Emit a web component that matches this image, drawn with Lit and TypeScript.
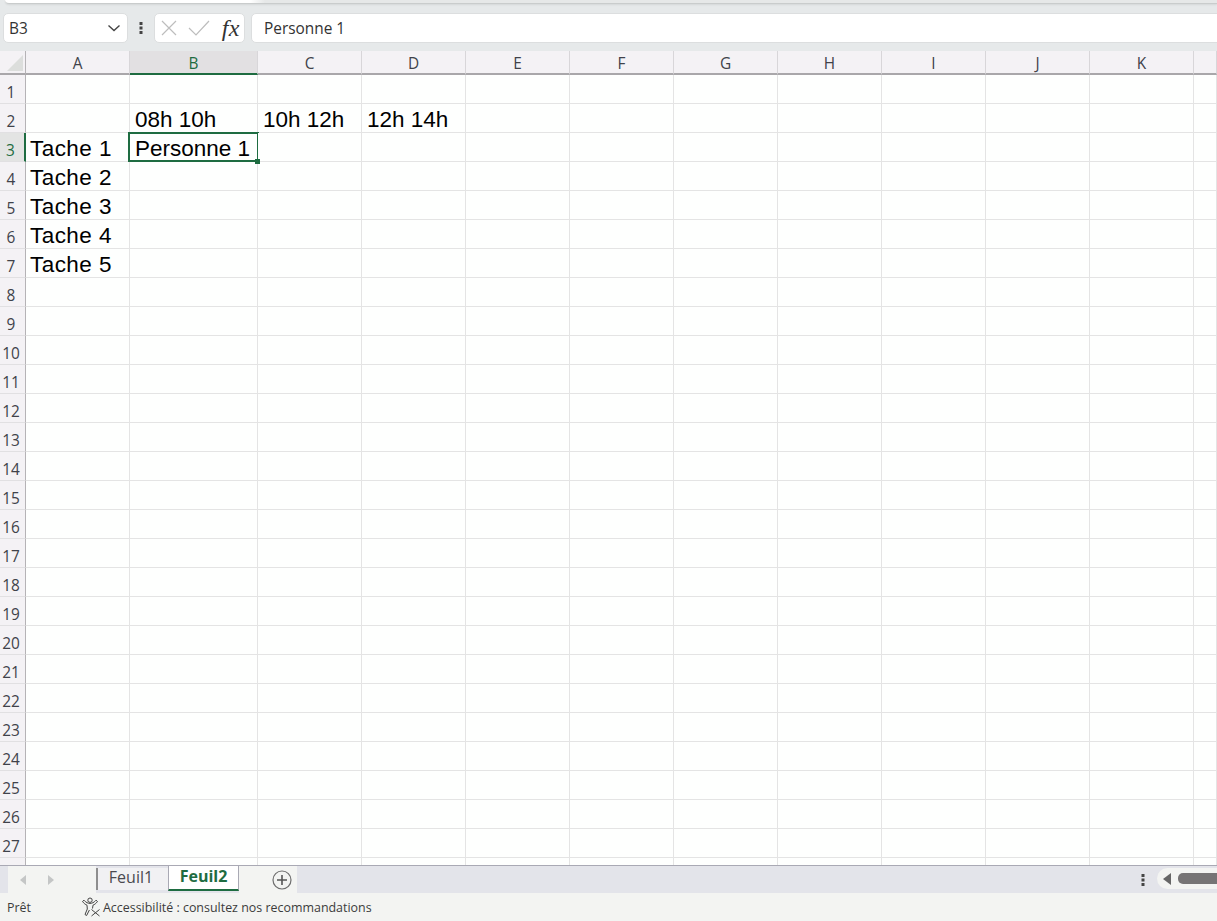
import { LitElement, html, css } from "lit";
import { customElement } from "lit/decorators.js";

const COLS = ["A", "B", "C", "D", "E", "F", "G", "H", "I", "J", "K", ""];
const CELLS: Record<string, string> = {
  B2: "08h 10h",
  C2: "10h 12h",
  D2: "12h 14h",
  A3: "Tache 1",
  B3: "Personne 1",
  A4: "Tache 2",
  A5: "Tache 3",
  A6: "Tache 4",
  A7: "Tache 5",
};

@customElement("app-root")
export class AppRoot extends LitElement {
  static styles = css`
    :host {
      display: flex;
      flex-direction: column;
      width: 1217px;
      height: 921px;
      overflow: hidden;
      background: #e6e9ea;
      font-family: "Open Sans", "Noto Sans", sans-serif;
      color: #333;
    }
    .ribbon-edge {
      height: 4px;
      padding-left: 5px;
      flex: none;
      box-sizing: border-box;
      background: #e6e9ea;
    }
    .ribbon-inner {
      height: 4px;
      box-sizing: border-box;
      background: linear-gradient(90deg, #fff 0, #fff 245px, #e6e8e8 260px);
      border-bottom: 1px solid #c9cccc;
      border-bottom-left-radius: 4px;
      box-shadow: 0 1px 2px rgba(0, 0, 0, 0.08);
    }
    .formula {
      flex: none;
      height: 47px;
      padding-top: 9px;
      display: flex;
      box-sizing: border-box;
      align-items: flex-start;
    }
    .formula-row {
      display: flex;
      align-items: stretch;
      height: 30px;
      width: 100%;
    }
    .box {
      background: #fff;
      border: 1px solid #dcdedf;
      border-radius: 5px;
      box-sizing: border-box;
      display: flex;
      align-items: center;
    }
    .name {
      width: 125px;
      margin-left: 3px;
      padding: 0 6px 0 5px;
      justify-content: space-between;
      font-size: 15.4px;
    }
    .grip {
      width: 26px;
      display: flex;
      align-items: center;
      justify-content: center;
    }
    .fx {
      width: 91px;
      padding: 0 4px 0 6px;
      justify-content: space-between;
    }
    .fx-sym {
      font-family: "Liberation Serif", serif;
      font-style: italic;
      font-size: 24px;
      line-height: 24px;
      color: #333;
      letter-spacing: 0.5px;
    }
    .value {
      flex: 1;
      margin-left: 6px;
      margin-right: -8px;
      padding-left: 12px;
      font-size: 15.4px;
    }
    .sheet {
      flex: none;
      display: grid;
      grid-template-columns: 26px 104px 128px repeat(9, 104px) 1fr;
      grid-template-rows: 24px repeat(28, 29px);
      height: 814px;
      overflow: hidden;
      background: #fff;
    }
    .corner {
      background: #f4f2f5;
      border-right: 1px solid #b5b3b6;
      border-bottom: 2px solid #a9a7aa;
      box-sizing: border-box;
      position: relative;
    }
    .tri {
      display: block;
      position: absolute;
      left: 7px;
      top: 4px;
    }
    .ch {
      background: #f4f2f5;
      border-right: 1px solid #d8d6d9;
      border-bottom: 2px solid #a9a7aa;
      box-sizing: border-box;
      display: flex;
      align-items: center;
      justify-content: center;
      padding-top: 2px;
      font-size: 15.4px;
      color: #40424a;
    }
    .ch.sel {
      background: #e2e0e2;
      border-bottom-color: #1e6c41;
      color: #1e6c41;
    }
    .rh {
      background: #f4f2f5;
      border-right: 1px solid #b5b3b6;
      border-bottom: 1px solid #e1e0e2;
      box-sizing: border-box;
      display: flex;
      align-items: flex-end;
      justify-content: center;
      padding-right: 3px;
      font-size: 15.4px;
      line-height: 20px;
      color: #40424a;
    }
    .rh.sel {
      background: #e3e4e3;
      border-right: 2px solid #1e6c41;
      color: #1e6c41;
    }
    .c {
      border-right: 1px solid #e4e4e4;
      border-bottom: 1px solid #e4e4e4;
      box-sizing: border-box;
      background: #fefffe;
      font-family: "Liberation Sans", Arial, sans-serif;
      font-size: 22.5px;
      line-height: 31px;
      color: #000;
      padding-left: 5px;
      white-space: nowrap;
      position: relative;
    }
    .c.col-a {
      letter-spacing: 0.45px;
      padding-left: 4px;
    }
    .c.active::after {
      content: "";
      position: absolute;
      left: -2px;
      top: -1px;
      right: -2px;
      bottom: -1px;
      border: 2px solid #1e6c41;
    }
    .handle {
      position: absolute;
      right: -3px;
      bottom: -3px;
      width: 5px;
      height: 5px;
      background: #1e6c41;
      z-index: 2;
    }
    .tabs {
      flex: none;
      height: 28px;
      display: flex;
      background: #e3e4ea;
      border-top: 1px solid #a9a9b4;
      box-sizing: border-box;
    }
    .nav {
      margin-left: 8px;
      width: 88px;
      background: #f3f4f2;
      display: flex;
      align-items: center;
      gap: 22px;
      padding-left: 12px;
      box-sizing: border-box;
    }
    .tab {
      font-size: 16px;
      display: flex;
      align-items: center;
      justify-content: center;
      box-sizing: border-box;
    }
    .tab.off {
      margin-top: 2px;
      width: 72px;
      height: 22px;
      padding: 0 4px 4px 0;
      border-left: 2px solid #8e8e8e;
      background: #f1f1f3;
      color: #4a4a50;
    }
    .tab.on {
      width: 71px;
      height: 25px;
      padding-bottom: 4px;
      background: #fff;
      border-left: 1px solid #a9a9b4;
      border-right: 1px solid #a9a9b4;
      border-bottom: 2px solid #1e6c41;
      color: #1e6c41;
      font-weight: 700;
    }
    .add {
      width: 58px;
      background: #f3f4f2;
      display: flex;
      align-items: center;
      padding-left: 33px;
      box-sizing: border-box;
    }
    .spacer {
      flex: 1;
    }
    .hgrip {
      width: 30px;
      display: flex;
      align-items: center;
      justify-content: center;
      margin-right: -1px;
    }
    .scroll {
      width: 60px;
      margin-top: 2px;
      height: 21px;
      background: #f3f4f2;
      border-radius: 11px 0 0 11px;
      display: flex;
      align-items: center;
      padding-left: 6px;
      box-sizing: border-box;
    }
    .thumb {
      margin-left: 7px;
      flex: 1;
      height: 11px;
      background: #767475;
      border-radius: 5px 0 0 5px;
    }
    .status {
      flex: none;
      height: 28px;
      background: #f3f4f2;
      display: flex;
      align-items: center;
      font-size: 12.45px;
      color: #3c3c3c;
    }
    .ready {
      width: 81px;
      padding-left: 7px;
      box-sizing: border-box;
    }
    .a11y {
      display: flex;
      align-items: center;
      gap: 2px;
    }
  `;

  private grip() {
    return html`<svg width="4" height="14" viewBox="0 0 4 14" aria-hidden="true">
      <rect x="0.5" y="1" width="3" height="3" fill="#444"></rect>
      <rect x="0.5" y="5.5" width="3" height="3" fill="#444"></rect>
      <rect x="0.5" y="10" width="3" height="3" fill="#444"></rect>
    </svg>`;
  }

  private cell(col: string, row: number) {
    if (!col) return html`<div class="c"></div>`;
    const id = `${col}${row}`;
    const active = id === "B3";
    return html`<div class="c ${active ? "active" : ""} ${col === "A" ? "col-a" : ""}">
      ${CELLS[id] ?? ""}${active ? html`<span class="handle"></span>` : ""}
    </div>`;
  }

  render() {
    const rows = Array.from({ length: 28 }, (_, i) => i + 1);
    return html`
      <div class="ribbon-edge"><div class="ribbon-inner"></div></div>
      <div class="formula">
        <div class="formula-row">
          <div class="box name">
            <span>B3</span>
            <svg width="14" height="8" viewBox="0 0 14 8" aria-hidden="true">
              <path d="M1.5 1.5 L7 6.5 L12.5 1.5" fill="none" stroke="#444" stroke-width="1.4"></path>
            </svg>
          </div>
          <div class="grip">${this.grip()}</div>
          <div class="box fx">
            <svg width="16" height="16" viewBox="0 0 16 16" aria-hidden="true">
              <path d="M1 1 L15 15 M15 1 L1 15" stroke="#bdbdbd" stroke-width="1.2" fill="none"></path>
            </svg>
            <svg width="22" height="16" viewBox="0 0 22 16" aria-hidden="true">
              <path d="M1 8 L8 15 L21 1" stroke="#bdbdbd" stroke-width="1.2" fill="none"></path>
            </svg>
            <span class="fx-sym">fx</span>
          </div>
          <div class="box value">Personne 1</div>
        </div>
      </div>
      <div class="sheet">
        <div class="corner">
          <svg class="tri" width="16" height="16" viewBox="0 0 16 16" aria-hidden="true">
            <path d="M16 0 V16 H0 Z" fill="#dcdedc"></path>
          </svg>
        </div>
        ${COLS.map((c) => html`<div class="ch ${c === "B" ? "sel" : ""}">${c}</div>`)}
        ${rows.map(
          (r) => html`
            <div class="rh ${r === 3 ? "sel" : ""}">${r < 28 ? r : ""}</div>
            ${COLS.map((c) => this.cell(c, r))}
          `
        )}
      </div>
      <div class="tabs">
        <div class="nav">
          <svg width="6" height="10" viewBox="0 0 6 10" aria-hidden="true"><path d="M6 0 V10 L0 5 Z" fill="#c4c6c6"></path></svg>
          <svg width="6" height="10" viewBox="0 0 6 10" aria-hidden="true"><path d="M0 0 V10 L6 5 Z" fill="#c4c6c6"></path></svg>
        </div>
        <div class="tab off">Feuil1</div>
        <div class="tab on">Feuil2</div>
        <div class="add">
          <svg width="20" height="20" viewBox="0 0 20 20" aria-hidden="true">
            <circle cx="10" cy="10" r="9" fill="none" stroke="#6e6e6e" stroke-width="1.2"></circle>
            <path d="M10 5 V15 M5 10 H15" stroke="#555" stroke-width="1.6"></path>
          </svg>
        </div>
        <div class="spacer"></div>
        <div class="hgrip">${this.grip()}</div>
        <div class="scroll">
          <svg width="8" height="12" viewBox="0 0 8 12" aria-hidden="true"><path d="M8 0 V12 L0 6 Z" fill="#666"></path></svg>
          <div class="thumb"></div>
        </div>
      </div>
      <div class="status">
        <div class="ready">Prêt</div>
        <div class="a11y">
          <svg width="20" height="20" viewBox="0 0 20 20" aria-hidden="true">
            <circle cx="9" cy="3.2" r="2.2" fill="none" stroke="#444" stroke-width="1"></circle>
            <path d="M1.5 4.5 L3 3.2 C5 5.6 7 6.4 9 6.4 C11 6.4 13 5.6 15 3.2 L16.5 4.5 C15 6.5 13.5 7.6 12 8.2 L11.5 11.5 M6 8.2 C4.5 7.6 3 6.5 1.5 4.5 M6 8.2 L6.3 12 L4 17.5 L5.6 18.5 L8.4 13" fill="none" stroke="#444" stroke-width="1"></path>
            <path d="M10.5 12.5 L18.5 19 M18.5 12.5 L10.5 19" fill="none" stroke="#444" stroke-width="1"></path>
          </svg>
          <span>Accessibilité : consultez nos recommandations</span>
        </div>
      </div>
    `;
  }
}
